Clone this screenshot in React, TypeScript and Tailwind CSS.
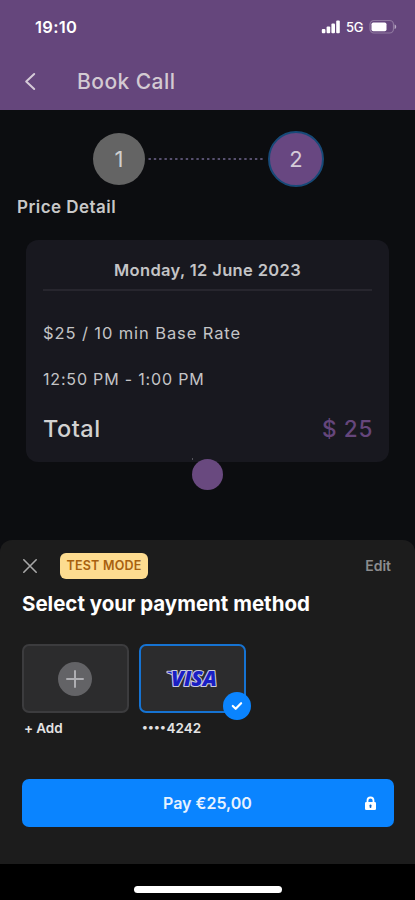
function StatusBar() {
  return (
    <div className="flex h-[54px] items-center justify-between pl-[35px] pr-[18px]">
      <span className="text-[16.5px] font-semibold leading-5 tracking-[0.3px] text-white">19:10</span>
      <div className="flex items-center">
        <svg width="19" height="14" viewBox="0 0 19 14" fill="#fff">
          <rect x="0.800" y="9" width="3.600" height="4.200" rx="1" />
          <rect x="5.600" y="6.600" width="3.600" height="6.600" rx="1" />
          <rect x="10.400" y="3.600" width="3.600" height="9.600" rx="1" />
          <rect x="15.200" y="0.400" width="3.600" height="12.800" rx="1" />
        </svg>
        <span className="ml-[6px] w-[18px] text-[13px] font-medium leading-4 tracking-[-0.2px] text-white">5G</span>
        <svg className="ml-[5px]" width="28" height="16" viewBox="0 0 28 16">
          <rect x="1" y="1.500" width="23.500" height="12.500" rx="4" fill="none" stroke="#8f789f" strokeWidth="1.200" />
          <rect x="2.500" y="3.400" width="15" height="8.800" rx="1.800" fill="#fff" />
          <path d="M25.600 5.500v4.500c1-.3 1.600-1.200 1.600-2.250s-.6-1.950-1.600-2.250z" fill="#b9a9c4" />
        </svg>
      </div>
    </div>
  );
}

function Header() {
  return (
    <header className="h-[110px] bg-[#65467c]">
      <StatusBar />
      <div className="flex h-[55px] items-center pl-[24px]">
        <svg width="12" height="20" viewBox="0 0 12 20" fill="none" stroke="#d6cbd8" strokeWidth="2" strokeLinecap="round" strokeLinejoin="round">
          <path d="M10.200 2L2.200 9.500l8 7.500" />
        </svg>
        <h1 className="ml-[41px] text-[21px] font-medium leading-7 tracking-[0.45px] text-[#d3cad2]">Book Call</h1>
      </div>
    </header>
  );
}

function Steps() {
  return (
    <div className="flex h-[56px] items-center pl-[93px]">
      <div className="flex size-[52px] items-center justify-center rounded-full bg-[#646464] text-[22px] text-[#cfcfcf]">1</div>
      <svg className="ml-[3px]" width="117" height="4" viewBox="0 0 117 4">
        <line x1="0.500" y1="2" x2="116" y2="2" stroke="#57506f" strokeWidth="2" strokeDasharray="2.400 2.920" />
      </svg>
      <div className="ml-[3px] flex size-[56px] items-center justify-center rounded-full border-2 border-[#174a78] bg-[#684781] text-[22px] text-[#d5cbd9]">2</div>
    </div>
  );
}

function PriceCard() {
  return (
    <section className="ml-[26px] h-[222px] w-[363px] rounded-[12px] bg-[#18181f] px-[17px] pt-[18px] text-[#c4c4c6]">
      <div className="flex h-[31px] justify-center whitespace-nowrap text-[16.5px] font-semibold leading-6 tracking-[0.35px]">Monday, 12 June 2023</div>
      <div className="h-[2px] bg-[#27262e]" />
      <div className="mt-[30px] text-[16.5px] leading-6 tracking-[0.900px]">$25 / 10 min Base Rate</div>
      <div className="mt-[22px] text-[16px] leading-6 tracking-[0.820px]">12:50 PM - 1:00 PM</div>
      <div className="mt-[22px] flex items-center justify-between leading-8">
        <span className="text-[23.5px] font-medium tracking-[0.5px] text-[#d2d2d2]">Total</span>
        <span className="-mr-[1px] text-[22.5px] font-medium tracking-[0.7px] text-[#65467c]">$ 25</span>
      </div>
    </section>
  );
}

function AddMethod() {
  return (
    <div className="w-[107px]">
      <div className="flex h-[69px] items-center justify-center rounded-[7px] border-2 border-[#3c3c3e] bg-[#2c2c2d]">
        <svg className="mr-[1px]" width="34" height="34" viewBox="0 0 34 34">
          <circle cx="17" cy="17" r="17" fill="#636366" />
          <path d="M17 9v16M9 17h16" stroke="#aeaeb2" strokeWidth="2" strokeLinecap="round" />
        </svg>
      </div>
      <div className="mt-[5px] pl-[2px] text-[13.5px] font-semibold leading-5 tracking-[-0.1px] text-[#e4e4e4]">+ Add</div>
    </div>
  );
}

function VisaMethod() {
  return (
    <div className="w-[107px]">
      <div className="relative flex h-[69px] items-center justify-center rounded-[7px] border-2 border-[#1673d2] bg-[#2c2c2d]">
        <svg width="64" height="40" viewBox="0 0 64 40" className="overflow-visible">
          <g fill="#1a1fc4" stroke="#c9cbe0" strokeWidth="2.200" strokeLinejoin="round" paintOrder="stroke">
            <path d="M7.500 12.800h7.500l1.800 7c-1.600-3-4.800-5.400-9.300-6.400z" />
            <text x="11" y="27.300" textLength="46" lengthAdjust="spacingAndGlyphs" className="font-['Open_Sans',sans-serif] text-[20.500px] font-extrabold italic">
              VISA
            </text>
          </g>
        </svg>
        <span className="absolute -bottom-[8.500px] -right-[7.500px] flex size-[28px] items-center justify-center rounded-full bg-[#0a84ff]">
          <svg width="12" height="10" viewBox="0 0 12 10" fill="none" stroke="#fff" strokeWidth="2.200" strokeLinecap="round" strokeLinejoin="round">
            <path d="M1.800 5l2.900 2.800 5.400-5.600" />
          </svg>
        </span>
      </div>
      <div className="mt-[5px] flex items-center pl-[3px] text-[13.5px] font-semibold leading-5 text-[#e4e4e4]">
        <span className="flex w-[25px] gap-[3.500px]">
          <span className="w-[2.500px] text-[18px] font-black leading-5">·</span>
          <span className="w-[2.500px] text-[18px] font-black leading-5">·</span>
          <span className="w-[2.500px] text-[18px] font-black leading-5">·</span>
          <span className="w-[2.500px] text-[18px] font-black leading-5">·</span>
        </span>
        <span>4242</span>
      </div>
    </div>
  );
}

function PaymentSheet() {
  return (
    <section className="h-[324px] rounded-t-[12px] bg-[#1c1c1c] pl-[22px] pr-[21px] pt-[13px]">
      <div className="flex h-[26px] items-center">
        <svg width="16" height="16" viewBox="0 0 16 16" stroke="#a8a8a8" strokeWidth="1.600" strokeLinecap="round">
          <path d="M1.800 1.800l12.400 12.400M14.200 1.800L1.800 14.200" />
        </svg>
        <span className="ml-[22px] flex h-[26px] w-[88px] items-center justify-center rounded-[6px] bg-[#fddc90] text-[12.500px] font-semibold tracking-[0.2px] text-[#a8610f]">TEST MODE</span>
        <span className="ml-auto mr-[3px] text-[14px] font-semibold leading-5 text-[#8c8c8e]">Edit</span>
      </div>
      <h2 className="mt-[11px] whitespace-nowrap text-[20.500px] font-bold leading-7 tracking-[-0.010px] text-white">Select your payment method</h2>
      <div className="mt-[26px] flex gap-[9.500px]">
        <AddMethod />
        <VisaMethod />
      </div>
      <button className="mt-[41px] flex h-[48px] w-full items-center rounded-[7px] bg-[#0a84ff] text-[#e6f2ff]">
        <span className="ml-[141px] text-[16px] font-semibold leading-6">Pay €25,00</span>
        <svg className="ml-auto mr-[17px]" width="13" height="15" viewBox="0 0 13 15">
          <path d="M3.500 7V4.500a3 3 0 0 1 6 0V7" fill="none" stroke="#fff" strokeWidth="1.800" />
          <rect x="1" y="6" width="11" height="8" rx="1.300" fill="#fff" />
          <path d="M6.500 9.300v1.700" stroke="#0a64c8" strokeWidth="1.800" strokeLinecap="round" />
        </svg>
      </button>
    </section>
  );
}

export default function App() {
  return (
    <main className="flex h-[900px] w-[415px] flex-col overflow-hidden bg-black font-['Inter',sans-serif]">
      <Header />
      <div className="h-[430px] bg-[#0c0d10] pt-[21px]">
        <Steps />
        <h2 className="ml-[17px] mt-[8px] text-[17px] font-semibold leading-6 tracking-[0.450px] text-[#c8c8c8]">Price Detail</h2>
        <div className="relative mt-[21px]">
          <PriceCard />
          <span className="absolute left-[192px] top-[219px] size-[31px] rounded-full bg-[#69497f]" />
          <span className="absolute left-[192px] top-[218px] h-[2px] w-px bg-[#55555c]" />
        </div>
      </div>
      <div className="bg-[#0c0d10]">
        <PaymentSheet />
      </div>
      <div className="flex flex-1 justify-center pt-[22px]">
        <div className="h-[7px] w-[148px] rounded-full bg-white" />
      </div>
    </main>
  );
}
